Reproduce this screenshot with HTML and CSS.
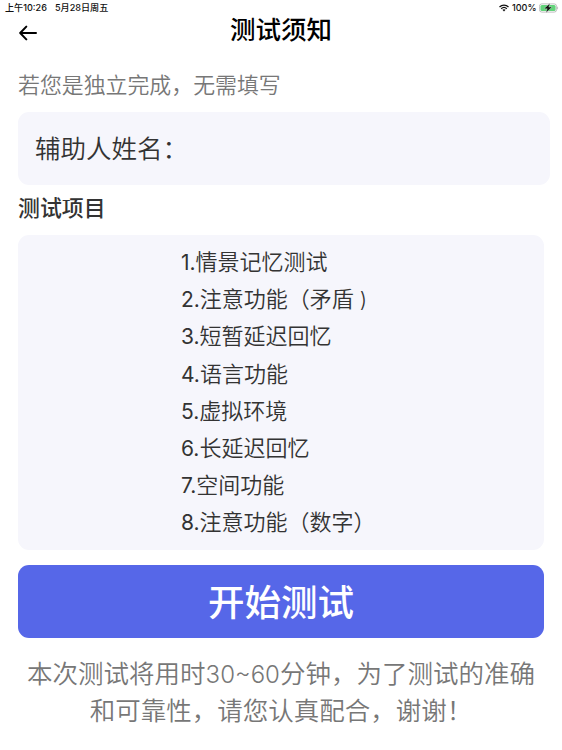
FILE: index.html
```html
<!DOCTYPE html>
<html lang="zh-CN">
<head>
    <meta charset="UTF-8">
    <meta name="viewport" content="width=device-width, initial-scale=1.0">
    <title>测试须知</title>
    <link rel="stylesheet" href="styles.css">
</head>
<body>
    <!-- Status bar -->
    <div class="status-bar">
        <div class="status-left">
            <span>上午10:26</span>
            <span>5月28日周五</span>
        </div>
        <div class="status-right">
            <svg class="wifi" viewBox="0 0 20 15">
                <path d="M1 5.5C6 .4 14 .4 19 5.5M4.4 9c3.2-3.2 8-3.2 11.2 0" fill="none" stroke="#111" stroke-width="2.5"/>
                <path d="M6.8 11.2c1.8-1.7 4.6-1.7 6.4 0L10 14.6z" fill="#111"/>
            </svg>
            <span>100%</span>
            <svg class="battery" viewBox="0 0 20 10">
                <rect x=".4" y=".9" width="17.2" height="8.2" rx="2.4" fill="#fff" stroke="#a5a5a5" stroke-width=".7"/>
                <rect x="1.4" y="1.9" width="15.2" height="6.2" rx="1.5" fill="#62d37a"/>
                <path d="M18.4 3.5c1 .4 1 2.6 0 3z" fill="#a5a5a5"/>
                <path d="M11 .3 5 5.7h3.2L7 9.7l6-5.6H9.8z" fill="#111" stroke="#fff" stroke-width=".3"/>
            </svg>
        </div>
    </div>

    <header class="nav">
        <a href="#" class="back-btn" aria-label="返回">
            <svg viewBox="0 0 18 16">
                <path d="M17 8H2M7.3 1.6 1.2 8l6.1 6.4"/>
            </svg>
        </a>
        <h1>测试须知</h1>
    </header>

    <main class="container">
        <p class="hint">若您是独立完成，无需填写</p>
        <label class="name-field">
            <span>辅助人姓名：</span>
            <input type="text" class="name-input">
        </label>

        <h2>测试项目</h2>
        <ul class="test-list">
            <li><span class="num">1.</span>情景记忆测试</li>
            <li><span class="num">2.</span>注意功能（矛盾<span class="paren"> )</span></li>
            <li><span class="num">3.</span>短暂延迟回忆</li>
            <li><span class="num">4.</span>语言功能</li>
            <li><span class="num">5.</span>虚拟环境</li>
            <li><span class="num">6.</span>长延迟回忆</li>
            <li><span class="num">7.</span>空间功能</li>
            <li><span class="num">8.</span>注意功能（数字）</li>
        </ul>

        <button class="start-btn">开始测试</button>
        <p class="notice">本次测试将用时<span class="minutes">30~60</span>分钟，为了测试的准确<br>和可靠性，请您认真配合，谢谢！</p>
    </main>
</body>
</html>
```

FILE: styles.css
```css
* {
    margin: 0;
    padding: 0;
    box-sizing: border-box;
}

body {
    font-family: "Liberation Sans", "Noto Sans CJK SC", sans-serif;
    background: #fff;
    color: #333;
    overflow: hidden;
}

/* Status bar */
.status-bar {
    display: flex;
    justify-content: space-between;
    height: 15px;
    padding: 0 3px 0 5px;
    font-family: Inter, "Noto Sans CJK SC", sans-serif;
    font-size: 9.1px;
    font-weight: 500;
    line-height: 15px;
    color: #111;
}

.status-left {
    display: flex;
    gap: 8px;
}

.status-right {
    display: flex;
    align-items: center;
    gap: 2.5px;
}

.wifi {
    width: 10px;
    height: 8px;
}

.battery {
    width: 20px;
    height: 10px;
}

/* Title */
.nav {
    display: grid;
    grid-template-columns: 60px 1fr 60px;
    height: 47px;
}

.back-btn {
    padding: 10px 0 0 19px;
}

.back-btn svg {
    display: block;
    width: 18px;
    height: 16px;
    fill: none;
    stroke: #000;
    stroke-width: 2;
    stroke-linecap: round;
    stroke-linejoin: round;
}

h1 {
    font-size: 25.5px;
    font-weight: 500;
    line-height: 30px;
    text-align: center;
    color: #000;
}

.container {
    padding: 0 18px;
}

.hint {
    height: 50px;
    font-size: 21.9px;
    font-weight: 350;
    line-height: 48px;
    color: #777;
}

.name-field {
    display: flex;
    align-items: center;
    width: 532px;
    height: 73px;
    padding: 0 17px 4px;
    border-radius: 11px;
    background: #f6f6fc;
    font-size: 25.5px;
    font-weight: 350;
    white-space: nowrap;
}

.name-input {
    flex: 1;
    min-width: 0;
    border: none;
    outline: none;
    background: transparent;
    font: inherit;
}

h2 {
    height: 50px;
    font-size: 21.9px;
    font-weight: 500;
    line-height: 48px;
}

.test-list {
    width: 526px;
    height: 315px;
    padding: 9px 0 0 163px;
    border-radius: 11px;
    background: #f6f6fc;
    list-style: none;
    font-size: 22px;
    font-weight: 350;
    line-height: 37.2px;
}

.num,
.paren {
    font-family: Inter, sans-serif;
    font-size: 21px;
    font-weight: 400;
}

.paren {
    font-weight: 300;
}

.start-btn {
    display: block;
    width: 526px;
    height: 73px;
    margin: 15px 0 18px;
    padding-bottom: 3px;
    border: none;
    border-radius: 11px;
    background: #5667e8;
    color: #fff;
    font-family: inherit;
    font-size: 36.5px;
    font-weight: 500;
}

.notice {
    font-size: 25.5px;
    font-weight: 350;
    line-height: 36px;
    text-align: center;
    white-space: nowrap;
    color: #777;
}

.minutes {
    font-family: Inter, sans-serif;
    font-size: 24px;
    font-weight: 300;
}
```
